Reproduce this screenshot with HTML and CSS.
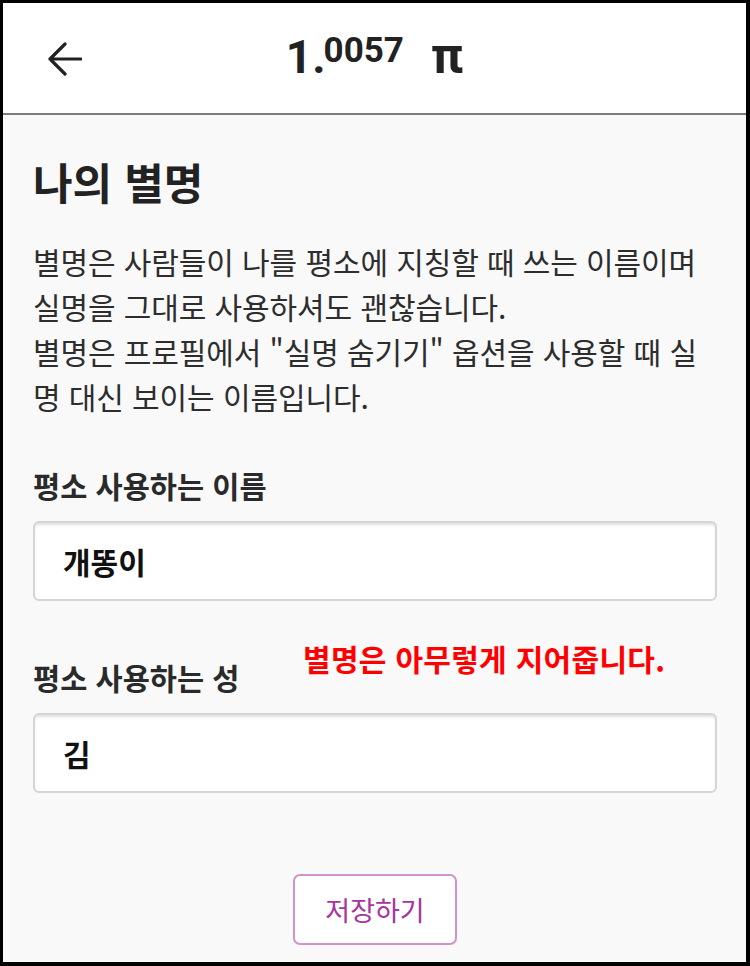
FILE: index.html
```html
<!DOCTYPE html>
<html lang="ko">
<head>
    <meta charset="UTF-8">
    <meta name="viewport" content="width=device-width, initial-scale=1.0">
    <title>나의 별명</title>
    <link rel="stylesheet" href="styles.css">
</head>
<body>
    <div class="screen">
        <header class="topbar">
            <a class="back" href="#" aria-label="뒤로">
                <svg width="36" height="36" viewBox="0 0 36 36">
                    <path d="M35 18H4M19 3L4 18l15 15" fill="none" stroke="#222" stroke-width="3.2" stroke-linecap="round" stroke-linejoin="round"/>
                </svg>
            </a>
            <div class="balance">1.<sup>0057</sup><span class="pi">π</span></div>
            <div></div>
        </header>

        <main class="content">
            <h1>나의 별명</h1>
            <p class="desc">별명은 사람들이 나를 평소에 지칭할 때 쓰는 이름이며<br>
                실명을 그대로 사용하셔도 괜찮습니다.<br>
                별명은 프로필에서 "실명 숨기기" 옵션을 사용할 때 실<br>
                명 대신 보이는 이름입니다.</p>

            <form class="nick-form" action="#" method="post">
                <div class="field">
                    <label for="first-name">평소 사용하는 이름</label>
                    <input type="text" id="first-name" name="first-name" value="개똥이">
                </div>

                <div class="field field-last">
                    <label for="last-name">평소 사용하는 성</label>
                    <span class="note">별명은 아무렇게 지어줍니다.</span>
                    <input type="text" id="last-name" name="last-name" value="김">
                </div>

                <div class="actions">
                    <button type="submit" class="btn">저장하기</button>
                </div>
            </form>
        </main>
    </div>
</body>
</html>
```

FILE: styles.css
```css
html, body {
    margin: 0;
    padding: 0;
}
body {
    background-color: #000;
    padding: 3px 4px 4px 3px;
    font-family: "Noto Sans CJK KR", "Noto Sans", sans-serif;
    color: #2a2a2a;
}
.screen {
    height: 959px;
    background-color: #f9f9fa;
    overflow: hidden;
}
.topbar {
    height: 110px;
    background-color: #fff;
    border-bottom: 2px solid #7d7d7d;
    display: grid;
    grid-template-columns: 1fr auto 1fr;
    align-items: center;
}
.back {
    display: flex;
    margin-left: 43px;
    margin-top: 2px;
}
.balance {
    font-family: Roboto, "Liberation Sans", sans-serif;
    font-weight: bold;
    font-size: 46px;
    color: #222;
    line-height: 1;
    margin-top: -4px;
}
.balance sup {
    font-size: 35px;
    vertical-align: 11px;
    margin-left: -2px;
}
.pi {
    margin-left: 27px;
    font-size: 50px;
}
.content {
    padding: 0 29px 0 30px;
}
h1 {
    margin: 42px 0 0;
    font-size: 43px;
    line-height: 48px;
    font-weight: bold;
    color: #222;
}
.desc {
    margin: 34px 0 0;
    font-size: 30px;
    line-height: 45px;
    color: #2d2d2d;
    letter-spacing: -0.1px;
}
.nick-form {
    margin-top: 46px;
}
.field {
    position: relative;
    margin-bottom: 56px;
}
.field label {
    display: block;
    font-size: 29.5px;
    line-height: 40px;
    font-weight: bold;
    color: #2a2a2a;
    margin-bottom: 16px;
}
.field input {
    display: block;
    box-sizing: border-box;
    width: 100%;
    height: 80px;
    padding: 0 28px;
    border: 2px solid #d5d5d5;
    border-radius: 6px;
    background-color: #fff;
    box-shadow: inset 0 3px 3px -1px rgba(0, 0, 0, 0.13);
    font-family: "Noto Sans CJK KR", sans-serif;
    font-size: 30px;
    font-weight: bold;
    color: #111;
    outline: none;
}
.note {
    position: absolute;
    left: 270px;
    top: -19px;
    font-size: 30px;
    line-height: 40px;
    font-weight: bold;
    color: #ff0000;
    letter-spacing: 0.3px;
}
.field-last {
    margin-bottom: 81px;
}
.actions {
    display: flex;
    justify-content: center;
}
.btn {
    width: 164px;
    height: 71px;
    background-color: #fff;
    border: 2px solid #d293cc;
    border-radius: 7px;
    color: #a8349d;
    font-family: "Noto Sans CJK KR", sans-serif;
    font-size: 27px;
    cursor: pointer;
}
```
